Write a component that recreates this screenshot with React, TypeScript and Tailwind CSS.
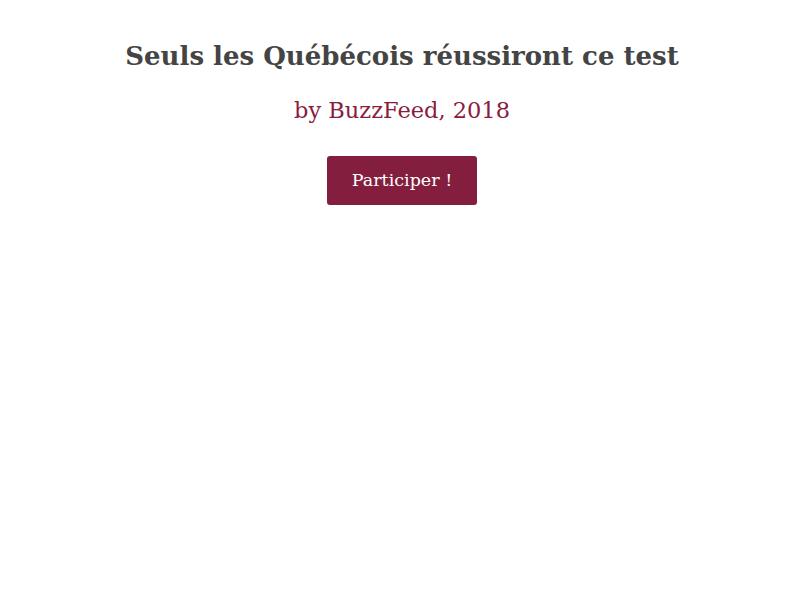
export default function App() {
  return (
    <div className="min-h-screen bg-white font-['DejaVu_Serif',serif] text-center">
      <div className="flex flex-col items-center pt-[36px] pl-[4px]">
        <h1 className="text-[26px] leading-[40px] font-bold text-[#444444]">
          Seuls les Québécois réussiront ce test
        </h1>
        <p className="mt-[18px] text-[22.5px] leading-[32px] text-[#8a1c41]">by BuzzFeed, 2018</p>
        <button className="mt-[30px] h-[49px] w-[150px] rounded-[3px] bg-[#841e3e] text-[17.5px] text-white">
          Participer !
        </button>
      </div>
    </div>
  );
}
